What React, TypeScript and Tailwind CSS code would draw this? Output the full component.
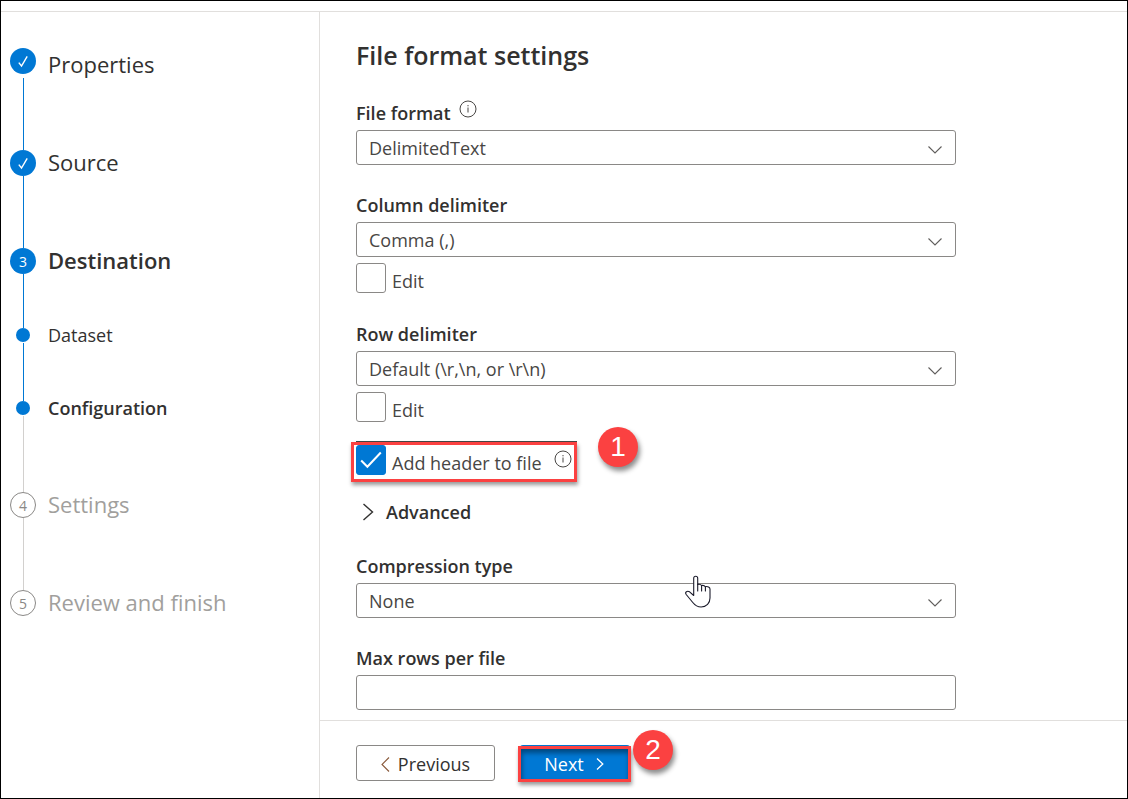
import { useState } from "react";
import type { ReactNode } from "react";

type Step = {
  label: string;
  marker: "check" | "dot" | string;
  state: "done" | "current" | "todo";
  height: string;
  line?: string;
  offset?: string;
};

const steps: Step[] = [
  { label: "Properties", marker: "check", state: "done", height: "h-[102px]", line: "mt-1 bg-[#0078d4]", offset: "pt-1" },
  { label: "Source", marker: "check", state: "done", height: "h-[98px]", line: "bg-[#0078d4]" },
  { label: "Destination", marker: "3", state: "current", height: "h-[80px]", line: "bg-[#0078d4]" },
  { label: "Dataset", marker: "dot", state: "done", height: "h-[73px]", line: "mt-px bg-[#0078d4]" },
  { label: "Configuration", marker: "dot", state: "current", height: "h-[91px]", line: "mt-px bg-[#d2d0ce]" },
  { label: "Settings", marker: "4", state: "todo", height: "h-[98px]", line: "bg-[#d2d0ce]" },
  { label: "Review and finish", marker: "5", state: "todo", height: "h-[26px]" },
];

function Marker({ step }: { step: Step }) {
  if (step.marker === "dot") {
    return <span className="size-3.5 shrink-0 rounded-full bg-[#0078d4]" />;
  }
  if (step.marker === "check") {
    return (
      <span className="flex size-[26px] shrink-0 items-center justify-center rounded-full bg-[#0078d4]">
        <svg viewBox="0 0 12 14" className="h-3.5 w-3" fill="none" stroke="#fff" strokeWidth="1.4">
          <path d="M1.8 8.6 4.5 12 10.2 2.4" />
        </svg>
      </span>
    );
  }
  return (
    <span
      className={
        step.state === "todo"
          ? "flex size-[26px] shrink-0 items-center justify-center rounded-full border border-[#8a8886] pt-px text-sm text-[#8a8886]"
          : "flex size-[26px] shrink-0 items-center justify-center rounded-full bg-[#0078d4] pt-px text-sm text-white"
      }
    >
      {step.marker}
    </span>
  );
}

function StepItem({ step }: { step: Step }) {
  const size = step.marker === "dot" ? "text-lg leading-[14px]" : "text-[22px] leading-6";
  const tone =
    step.state === "todo"
      ? "text-[#a19f9d]"
      : step.state === "current"
        ? "font-semibold text-[#323130]"
        : "text-[#323130]";
  return (
    <li className={`flex gap-3 ${step.height}`} aria-current={step.state === "current" ? "step" : undefined}>
      <div className="flex w-[26px] shrink-0 flex-col items-center">
        <Marker step={step} />
        {step.line && <span className={`w-px flex-1 ${step.line}`} />}
      </div>
      <span className={`whitespace-nowrap ${size} ${tone} ${step.offset ?? ""}`}>{step.label}</span>
    </li>
  );
}

function InfoIcon() {
  return (
    <svg viewBox="0 0 18 18" className="-mt-px size-[18px] shrink-0" fill="none" stroke="#484644" aria-hidden="true">
      <circle cx="9" cy="9" r="8" />
      <path d="M9 7.5v5M9 5v1.3" />
    </svg>
  );
}

function SelectBox({ id, value }: { id: string; value: string }) {
  return (
    <div className="relative">
      <select
        id={id}
        defaultValue={value}
        className="block h-[35px] w-full appearance-none rounded-[3px] border border-[#8a8886] bg-white px-3 pt-px text-lg leading-6 text-[#484644]"
      >
        <option>{value}</option>
      </select>
      <svg
        viewBox="0 0 14 8"
        className="pointer-events-none absolute top-4 right-3.5 h-2 w-3.5"
        fill="none"
        stroke="#605e5c"
        strokeWidth="1.1"
        aria-hidden="true"
      >
        <path d="M.5.5 7 7 13.5.5" />
      </svg>
    </div>
  );
}

function FieldLabel({ htmlFor, children, info }: { htmlFor: string; children: ReactNode; info?: boolean }) {
  return (
    <div className="mb-[5px] flex h-6 items-start gap-2">
      <label htmlFor={htmlFor} className="text-lg leading-6 font-semibold text-[#323130]">
        {children}
      </label>
      {info && <InfoIcon />}
    </div>
  );
}

function CheckField({
  id,
  label,
  checked,
  onChange,
  info,
}: {
  id: string;
  label: string;
  checked: boolean;
  onChange: (value: boolean) => void;
  info?: boolean;
}) {
  return (
    <div className="flex h-[30px] items-start">
      <span className="relative size-[30px] shrink-0">
        <input
          id={id}
          type="checkbox"
          checked={checked}
          onChange={(event) => onChange(event.target.checked)}
          className="block size-[30px] appearance-none rounded-[3px] border border-[#8a8886] bg-white checked:border-[#0078d4] checked:bg-[#0078d4]"
        />
        {checked && (
          <svg
            viewBox="0 0 30 30"
            className="pointer-events-none absolute inset-0"
            fill="none"
            stroke="#fff"
            strokeWidth="2"
            aria-hidden="true"
          >
            <path d="M5.2 15.5 11.4 21.8 24.8 7.5" />
          </svg>
        )}
      </span>
      <label htmlFor={id} className="pt-1.5 pl-1.5 text-lg leading-6 whitespace-nowrap text-[#484644]">
        {label}
      </label>
      {info && (
        <span className="pt-1.5 pl-3">
          <InfoIcon />
        </span>
      )}
    </div>
  );
}

function Callout({ className, children }: { className: string; children: ReactNode }) {
  return (
    <span
      className={`absolute z-10 flex size-10 items-center justify-center rounded-full bg-[#fb4141] font-['Liberation_Sans',sans-serif] text-[28px] leading-none text-white shadow-[2px_4px_5px_rgba(0,0,0,0.45)] ${className}`}
    >
      {children}
    </span>
  );
}

function HandPointer() {
  return (
    <svg
      viewBox="0 0 26 34"
      className="pointer-events-none absolute -top-2 left-[329px] z-10 h-[34px] w-[26px]"
      fill="#fff"
      stroke="#1b1b2b"
      strokeWidth="1.1"
      strokeLinejoin="round"
      strokeLinecap="round"
      aria-hidden="true"
    >
      <path d="M8.7 20.5V3.2a2 2 0 0 1 4 0V9.4c1.6-.4 3.2 0 3.9 1.1 1.5-.4 3 .1 3.7 1.2 2.4-.5 4.7.3 4.7 2.3V23c0 5-3.5 9-8.9 9-4 0-6-1.5-8.3-4.5L1.2 19.5c-1.7-2.5 1.1-4.1 3.4-2.7Z" />
      <path d="M12.7 9.4V16M16.6 10.5V16M20.4 11.7V16" fill="none" />
    </svg>
  );
}

export default function App() {
  const [editColumn, setEditColumn] = useState(false);
  const [editRow, setEditRow] = useState(false);
  const [addHeader, setAddHeader] = useState(true);

  return (
    <div className="flex min-h-screen flex-col border border-black bg-white pt-2.5 font-['Open_Sans','Noto_Sans',sans-serif] text-[#323130]">
      <div className="flex flex-1 border-t border-[#e1dfdd]">
        <nav aria-label="Wizard steps" className="w-[319px] shrink-0 border-r border-[#e1dfdd] pt-9 pl-[9px]">
          <ol>
            {steps.map((step) => (
              <StepItem key={step.label} step={step} />
            ))}
          </ol>
        </nav>

        <div className="flex min-w-0 flex-1 flex-col">
          <main className="flex-1 px-9 pt-[25px] pb-2.5">
            <form id="settings" className="max-w-[600px]" onSubmit={(event) => event.preventDefault()}>
              <h1 className="text-[25px] leading-9 font-semibold">File format settings</h1>

              <div className="mt-7">
                <FieldLabel htmlFor="format" info>
                  File format
                </FieldLabel>
                <SelectBox id="format" value="DelimitedText" />
              </div>

              <div className="mt-7">
                <FieldLabel htmlFor="column">Column delimiter</FieldLabel>
                <SelectBox id="column" value="Comma (,)" />
                <div className="mt-1.5">
                  <CheckField id="edit-column" label="Edit" checked={editColumn} onChange={setEditColumn} />
                </div>
              </div>

              <div className="mt-[29px]">
                <FieldLabel htmlFor="row">Row delimiter</FieldLabel>
                <SelectBox id="row" value="Default (\r,\n, or \r\n)" />
                <div className="mt-1.5">
                  <CheckField id="edit-row" label="Edit" checked={editRow} onChange={setEditRow} />
                </div>
              </div>

              <div className="relative mt-[19px] w-[221px] border-t border-[#484644] pt-[3px]">
                <CheckField
                  id="header"
                  label="Add header to file"
                  checked={addHeader}
                  onChange={setAddHeader}
                  info
                />
                <span className="pointer-events-none absolute top-0 right-0 -bottom-[7px] -left-[5px] border-3 border-[#fb4141] shadow-[1px_3px_4px_rgba(0,0,0,0.4)]" />
                <Callout className="-top-[15px] left-[242px]">1</Callout>
              </div>

              <button type="button" className="mt-[25px] flex items-center gap-3 pl-1.5 text-lg leading-6 font-semibold">
                <svg viewBox="0 0 12 18" className="h-[18px] w-3" fill="none" stroke="#323130" strokeWidth="1.4" aria-hidden="true">
                  <path d="M1.5 1 10.5 9 1.5 17" />
                </svg>
                Advanced
              </button>

              <div className="mt-[30px]">
                <FieldLabel htmlFor="compression">Compression type</FieldLabel>
                <div className="relative">
                  <SelectBox id="compression" value="None" />
                  <HandPointer />
                </div>
              </div>

              <div className="mt-7">
                <FieldLabel htmlFor="rows">Max rows per file</FieldLabel>
                <input
                  id="rows"
                  type="text"
                  className="block h-[35px] w-full rounded-[3px] border border-[#8a8886] bg-white px-3 text-lg"
                />
              </div>
            </form>
          </main>

          <footer className="flex gap-[25px] border-t border-[#e1dfdd] px-9 pt-6 pb-[17px]">
            <button
              type="button"
              className="flex h-9 w-[139px] items-center justify-center gap-2 rounded-[3px] border border-[#8a8886] bg-white pt-0.5 text-lg leading-6"
            >
              <svg viewBox="0 0 9 15" className="h-[15px] w-[9px]" fill="none" stroke="#8a5a3c" strokeWidth="1.1" aria-hidden="true">
                <path d="M8 .5 1 7.5 8 14.5" />
              </svg>
              Previous
            </button>
            <div className="relative">
              <button
                type="submit"
                form="settings"
                className="flex h-9 w-[110px] items-center justify-center gap-3 rounded-[3px] bg-[#0078d4] pt-0.5 pr-0.5 text-lg leading-6 text-white"
              >
                Next
                <svg viewBox="0 0 8 12" className="h-3 w-2" fill="none" stroke="#fff" strokeWidth="1.3" aria-hidden="true">
                  <path d="M1 .5 6.8 6 1 11.5" />
                </svg>
              </button>
              <span className="pointer-events-none absolute top-px -right-px -bottom-px -left-0.5 border-3 border-[#fb4141] shadow-[1px_3px_4px_rgba(0,0,0,0.4),inset_1px_4px_5px_rgba(0,0,0,0.4)]" />
              <Callout className="-top-[15px] left-[113px]">2</Callout>
            </div>
          </footer>
        </div>
      </div>
    </div>
  );
}
